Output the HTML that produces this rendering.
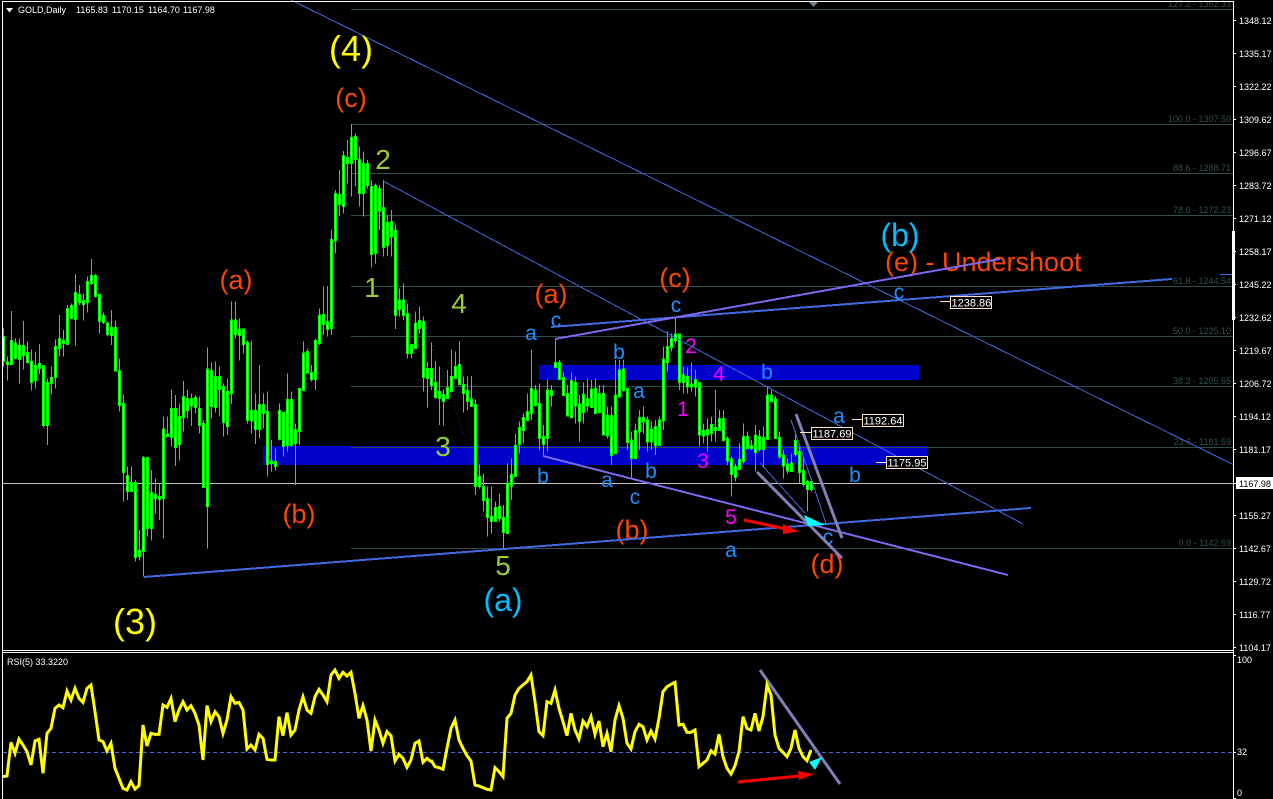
<!DOCTYPE html>
<html>
<head>
<meta charset="utf-8">
<title>GOLD,Daily</title>
<style>
html,body{margin:0;padding:0;background:#000;width:1273px;height:799px;overflow:hidden}
svg{position:absolute;left:0;top:0;display:block;font-family:"Liberation Sans",Arial,sans-serif}
.n{vector-effect:non-scaling-stroke;fill:none}
.c{shape-rendering:crispEdges}
.ax text{font-size:9px;fill:#fff}
.fib text{font-size:9px;fill:#2f4f4f;text-anchor:end}
.o{fill:#ff4500;font-size:27px;text-anchor:middle}
.g{fill:#9acd32;font-size:28px;text-anchor:middle}
.m{fill:#ff00ff;font-size:21px;text-anchor:middle}
.b{fill:#1e90ff;font-size:21px;text-anchor:middle}
.tag text{font-size:11px;fill:#fff}
.tag rect{fill:#000;stroke:#ffe4c4;stroke-width:1}
.tag path{stroke:#ffe4c4;stroke-width:1;fill:none}
</style>
</head>
<body>
<svg width="1273" height="799" viewBox="0 0 1273 799" xmlns="http://www.w3.org/2000/svg">
<rect width="1273" height="799" fill="#000"/>

<!-- zones -->
<g class="c">
<rect x="539" y="365" width="380" height="15" fill="#0000cd"/>
<rect x="263" y="446" width="664" height="19" fill="#0000cd"/>
</g>

<!-- fibo lines -->
<g class="fib">
<path class="c" d="M351 9.5H1233M351 124.5H1233M351 173.5H1233M351 215.5H1233M351 286.5H1233M351 336.5H1233M351 386.5H1233M351 447.5H1233M351 548.5H1233" stroke="#2f4f4f" stroke-width="1" fill="none"/>
<text x="1231" y="7">127.2 - 1352.33</text>
<text x="1231" y="122">100.0 - 1307.50</text>
<text x="1231" y="171">88.6 - 1288.71</text>
<text x="1231" y="213">78.6 - 1272.23</text>
<text x="1231" y="284">61.8 - 1244.54</text>
<text x="1231" y="334">50.0 - 1225.10</text>
<text x="1231" y="384">38.2 - 1205.65</text>
<text x="1231" y="445">23.6 - 1181.59</text>
<text x="1231" y="546">0.0 - 1142.69</text>
</g>

<!-- current price line -->
<path class="c" d="M3 483.5H1233" stroke="#c0c0c0" stroke-width="1"/>
<path d="M351 124L353 130L397 253L427 333L447 383L473 463L503 548" fill="none" stroke="#22228a" stroke-width="1" stroke-dasharray="1 3"/>

<!-- candles -->
<g class="c">
<g transform="translate(.5,250) scale(1,.33333)">
<path id="w1" class="n" stroke="#00ff00" stroke-width="1" d="M3 235V350M7 320V392M11 183V345M15 265V325M19 265V400M23 213V358M27 275V340M31 298V422M35 305V415M39 282V372M43 345V532M47 385V585M51 350V433M55 268V415M59 195V320M63 240V320M67 165V280M71 160V205M75 72V287M79 105V165M83 130V212M87 80V188M91 27V105M95 72V143M99 136V250M103 188V222M107 215V260M111 180V285M115 212V362M119 325V485M123 433V755M127 650V750M131 650V722M135 690V935M139 840V932M143 618V980M147 625V860M151 660V872M155 685V790M159 700V810M163 500V865M167 500V558M171 418V590M175 435V648M179 460V632M183 393V545M187 420V505M191 430V528M195 435V490M199 440V550M203 510V710M207 292V895M211 338V505M215 335V488M219 350V500M223 400V560M227 385V555M231 155V462M235 155V265M239 205V332M243 235V310M247 272V520M251 272V550M255 430V582M259 345V565M263 430V535M267 425V680M271 570V665M275 595V662M279 460V572M283 490V620M287 370V605M291 425V590M295 520V705M299 418V585M303 275V420M307 295V368M311 345V395M315 265V420"/>
<path class="n" stroke="#00ff00" stroke-width="3" stroke-linecap="square" d="M3 262V332M7 339V341M11 275V340M15 282V322M19 290V325M23 290V313M27 310V335M31 338V394M35 350V388M39 344V352M43 350V523M47 400V523M51 386V398M55 292V380M59 268V292M63 275V278M67 178V280M71 170V203M75 130V205M79 136V155M83 154V160M87 97V155M91 80V97M95 80V136M99 136V212M103 200V214M107 222V250M111 236V254M115 236V360M119 365V463M123 463V665M127 680V722M131 700V722M135 700V920M139 905V917M143 625V902M147 625V832M151 730V832M155 736V742M159 742V746M163 540V742M167 555V557M171 478V560M175 478V590M179 502V580M183 443V500M187 448V478M191 448V465M195 445V470M199 478V523M203 523V710M207 360V766M211 365V466M215 382V470M219 382V416M223 412V515M227 428V527M231 213V428M235 213V250M239 240V254M243 240V280M247 280V508M251 485V510M255 484V536M259 466V536M263 466V488M267 488V640M271 636V638M275 637V646M279 485V565M283 490V586M287 452V584M291 452V584M295 541V578M299 418V541M303 312V418M307 307V366M311 370V385M315 274V386"/>
<path class="n" stroke="#ffffff" stroke-width="1" d="M3 262V332M7 339V341M11 275V340M15 282V322M19 290V325M23 290V313M27 310V335M31 338V394M35 350V388M39 344V352M43 350V523M47 400V523M51 386V398M55 292V380M59 268V292M63 275V278M67 178V280M71 170V203M75 130V205M79 136V155M83 154V160M87 97V155M91 80V97M95 80V136M99 136V212M103 200V214M107 222V250M111 236V254M115 236V360M119 365V463M123 463V665M127 680V722M131 700V722M135 700V920M139 905V917M143 625V902M147 625V832M151 730V832M155 736V742M159 742V746M163 540V742M167 555V557M171 478V560M175 478V590M179 502V580M183 443V500M187 448V478M191 448V465M195 445V470M199 478V523M203 523V710M207 360V766M211 365V466M215 382V470M219 382V416M223 412V515M227 428V527M231 213V428M235 213V250M239 240V254M243 240V280M247 280V508M251 485V510M255 484V536M259 466V536M263 466V488M267 488V640M271 636V638M275 637V646M279 485V565M283 490V586M287 452V584M291 452V584M295 541V578M299 418V541M303 312V418M307 307V366M311 370V385M315 274V386"/>
</g>
<g transform="translate(.5,100) scale(1,.33333)">
<path class="n" stroke="#00ff00" stroke-width="1" d="M319 625V735M323 560V705M327 558V710M331 388V705M335 270V460M339 210V348M343 153V340M347 120V250M351 72V290M355 100V260M359 140V320M363 155V350M367 180V265M371 240V503M375 250V490M379 255V390M383 240V470M387 345V468M391 330V470M395 373V687M399 565V650M403 550V660M407 610V775M411 735V775M415 635V745M419 620V700M423 650V875M427 785V922M431 727V870M435 783V895M439 800V975M443 868V977M447 810V893M451 748V877M455 755V830M459 723V852M463 830V938M467 830V930M471 828V918M475 898V1185M479 1093V1165M483 1120V1235M487 1160V1310M491 1160V1300M495 1205V1265M499 1180V1265M503 1215V1345M507 1090V1300M511 1075V1200M515 1000V1130M519 965V1060"/>
<path class="n" stroke="#00ff00" stroke-width="3" stroke-linecap="square" d="M319 648V728M323 647V670M327 668V685M331 422V682M335 283V420M339 287V310M343 170V316M347 175V187M351 115V187M355 112V175M359 182V277M363 193V277M367 193V253M371 262V460M375 260V458M379 268V330M383 325V440M387 370V433M391 367V408M395 395V643M399 603V625M403 603V643M407 643V758M411 737V758M415 672V742M419 665V682M423 667V830M427 808V832M431 808V853M435 850V890M439 877V892M443 887V902M447 865V893M451 832V872M455 802V832M459 797V850M463 857V877M467 875V902M471 900V916M475 916V1156M479 1132V1156M483 1163V1198M487 1198V1250M491 1252V1262M495 1226V1262M499 1222V1252M503 1255V1295M507 1152V1297M511 1127V1155M515 1040V1127M519 985V1030"/>
<path class="n" stroke="#ffffff" stroke-width="1" d="M319 648V728M323 647V670M327 668V685M331 422V682M335 283V420M339 287V310M343 170V316M347 175V187M351 115V187M355 112V175M359 182V277M363 193V277M367 193V253M371 262V460M375 260V458M379 268V330M383 325V440M387 370V433M391 367V408M395 395V643M399 603V625M403 603V643M407 643V758M411 737V758M415 672V742M419 665V682M423 667V830M427 808V832M431 808V853M435 850V890M439 877V892M443 887V902M447 865V893M451 832V872M455 802V832M459 797V850M463 857V877M467 875V902M471 900V916M475 916V1156M479 1132V1156M483 1163V1198M487 1198V1250M491 1252V1262M495 1226V1262M499 1222V1252M503 1255V1295M507 1152V1297M511 1127V1155M515 1040V1127M519 985V1030"/>
</g>
<g transform="translate(.5,310) scale(1,.33333)">
<path class="n" stroke="#00ff00" stroke-width="1" d="M523 310V400M527 250V330M531 120V330M535 225V290M539 220V420M543 345V440M547 208V425M551 225V290M555 85V175M559 150V205M563 188V255M567 225V320M571 188V325M575 200V340M579 255V395M583 218V340M587 205V305M591 210V290M595 205V310M599 225V310M603 225V375M607 290V385M611 290V465M615 150V430M619 150V258M623 150V245M627 235V420M631 365V505M635 340V440M639 300V420M643 290V370M647 320V425M651 335V420M655 330V435M659 320V405M663 110V360M667 65V185M671 70V125M675 22V100M679 75V240M683 170V250M687 173V250M691 157V245M695 180V260M699 215V410M703 340V400M707 325V425M711 320V395M715 240V395M719 300V360M723 300V395M727 380V465M731 440V560M735 460V515M739 400V475M743 340V460M747 365V415M751 390V420M755 345V485M759 360V425M763 350V470M767 228V390M771 240V272M775 258V385M779 365V445M783 420V505M787 445V490M791 430V485M795 365V440M799 410V520M803 440V530M807 510V605M811 505V545"/>
<path class="n" stroke="#00ff00" stroke-width="3" stroke-linecap="square" d="M523 325V358M527 308V328M531 238V308M535 243V283M539 283V383M543 382V400M547 243V382M551 245V253M555 160V170M559 160V205M563 205V253M567 253V315M571 215V320M575 220V285M579 285V332M583 255V305M587 268V285M591 240V290M595 238V308M599 253V305M603 253V372M607 320V375M611 320V433M615 258V428M619 183V258M623 180V238M627 238V395M631 393V443M635 365V443M639 325V363M643 325V333M647 333V393M651 360V393M655 352V405M659 333V403M663 150V330M667 113V155M671 88V110M675 75V88M679 75V215M683 198V215M687 203V228M691 225V228M695 212V228M699 220V372M703 365V375M707 362V372M711 347V368M715 355V358M719 328V358M723 328V388M727 388V450M731 450V490M735 472V500M739 452V475M743 382V452M747 382V412M751 410V412M755 378V425M759 382V415M763 385V415M767 258V385M771 258V272M775 270V382M779 385V438M783 438V465M787 465V480M791 462V482M795 395V430M799 427V485M803 485V520M807 518V535M811 518V535"/>
<path class="n" stroke="#ffffff" stroke-width="1" d="M523 325V358M527 308V328M531 238V308M535 243V283M539 283V383M543 382V400M547 243V382M551 245V253M555 160V170M559 160V205M563 205V253M567 253V315M571 215V320M575 220V285M579 285V332M583 255V305M587 268V285M591 240V290M595 238V308M599 253V305M603 253V372M607 320V375M611 320V433M615 258V428M619 183V258M623 180V238M627 238V395M631 393V443M635 365V443M639 325V363M643 325V333M647 333V393M651 360V393M655 352V405M659 333V403M663 150V330M667 113V155M671 88V110M675 75V88M679 75V215M683 198V215M687 203V228M691 225V228M695 212V228M699 220V372M703 365V375M707 362V372M711 347V368M715 355V358M719 328V358M723 328V388M727 388V450M731 450V490M735 472V500M739 452V475M743 382V452M747 382V412M751 410V412M755 378V425M759 382V415M763 385V415M767 258V385M771 258V272M775 270V382M779 385V438M783 438V465M787 465V480M791 462V482M795 395V430M799 427V485M803 485V520M807 518V535M811 518V535"/>
</g>
</g>

<!-- labels -->
<text x="351" y="61" text-anchor="middle" font-size="36" fill="#ffff00">(4)</text>
<text x="135" y="634" text-anchor="middle" font-size="36" fill="#ffff00">(3)</text>
<text class="o" x="351" y="107">(c)</text>
<text class="o" x="236" y="289">(a)</text>
<text class="o" x="299" y="523">(b)</text>
<text class="o" x="551" y="303">(a)</text>
<text class="o" x="675" y="287">(c)</text>
<text class="o" x="632" y="539">(b)</text>
<text class="o" x="827" y="573">(d)</text>
<text x="885" y="271" font-size="27" fill="#ff4500">(e) - Undershoot</text>
<text x="503" y="611" text-anchor="middle" font-size="32" fill="#00bfff">(a)</text>
<text x="900" y="246" text-anchor="middle" font-size="32" fill="#00bfff">(b)</text>
<text class="g" x="383" y="169">2</text>
<text class="g" x="372" y="297">1</text>
<text class="g" x="459" y="313">4</text>
<text class="g" x="443" y="456">3</text>
<text class="g" x="503" y="575">5</text>
<text class="m" x="691" y="353">2</text>
<text class="m" x="719" y="381">4</text>
<text class="m" x="683" y="416">1</text>
<text class="m" x="703" y="468">3</text>
<text class="m" x="731" y="524">5</text>
<text class="b" x="531" y="340">a</text>
<text class="b" x="556" y="327">c</text>
<text class="b" x="619" y="359">b</text>
<text class="b" x="639" y="398">a</text>
<text class="b" x="676" y="312">c</text>
<text class="b" x="767" y="379">b</text>
<text class="b" x="543" y="483">b</text>
<text class="b" x="607" y="487">a</text>
<text class="b" x="651" y="478">b</text>
<text class="b" x="635" y="504">c</text>
<text class="b" x="731" y="557">a</text>
<text class="b" x="828" y="544">c</text>
<text class="b" x="839" y="423">a</text>
<text class="b" x="855" y="482">b</text>
<text class="b" x="899" y="299">c</text>

<!-- trend lines -->
<g class="c" fill="none">
<path d="M291 0L1234 465" stroke="#4169e1" stroke-width="1"/>
<path d="M383 181L1023 524" stroke="#4169e1" stroke-width="1"/>
<path d="M1220 274.5H1232" stroke="#4169e1" stroke-width="1"/>
<path d="M760 463L805 513" stroke="#4169e1" stroke-width="1"/>
<path d="M791 420L826 523" stroke="#4169e1" stroke-width="1"/>
<path d="M144 577L1031 508" stroke="#4169e1" stroke-width="2"/>
<path d="M551 327L1172 279" stroke="#4169e1" stroke-width="2"/>
<path d="M555 339L1000 259" stroke="#7b68ee" stroke-width="2"/>
<path d="M543 456L1008 575" stroke="#7b68ee" stroke-width="2"/>
</g>
<g fill="none" stroke="#8080b8" stroke-width="3">
<path d="M796 414L842 538"/>
<path d="M757 472L842 558"/>
<path d="M760 670L840 784"/>
</g>

<!-- arrows -->
<path d="M744 520L784 528.5" stroke="#ff0000" stroke-width="3" fill="none"/>
<path d="M783 524L799 531.500L783 534Z" fill="#ff0000"/>
<path d="M738 782L799 776" stroke="#ff0000" stroke-width="3" fill="none"/>
<path d="M798 771L814 774L799 780Z" fill="#ff0000"/>
<path d="M804 515L825 525L808 526Z" fill="#00ffff"/>
<path d="M822 757L809 762L815 770Z" fill="#00ffff"/>

<!-- price tags -->
<g class="tag c">
<path d="M852 419.500H862M800 432.500H811M876 462.500H886M940 301.500H950"/>
<rect x="862.500" y="414.500" width="41" height="12"/>
<rect x="811.500" y="427.500" width="41" height="12"/>
<rect x="886.500" y="456.500" width="41" height="12"/>
<rect x="950.500" y="296.500" width="41" height="12"/>
</g>
<g class="tag">
<text x="863.500" y="424.500">1192.64</text>
<text x="812.500" y="437.500">1187.69</text>
<text x="887.500" y="466.500">1175.95</text>
<text x="951.500" y="306.500">1238.86</text>
</g>

<!-- RSI -->
<path class="c" d="M3 752.500H1233" stroke="#4169e1" stroke-width="1" stroke-dasharray="4 3" fill="none"/>
<g transform="translate(0,645) scale(.33333)">
<polyline class="n" stroke="#ffff00" stroke-width="3" points="9,395 21,393 33,292 45,325 57,282 69,300 81,320 93,360 105,288 117,283 129,385 141,265 153,250 165,190 177,180 189,188 201,138 213,165 225,130 237,160 249,172 261,130 273,120 285,200 297,285 309,290 321,318 333,295 345,370 357,400 369,430 381,435 393,410 405,432 417,422 429,240 441,303 453,265 465,268 477,268 489,180 501,187 513,160 525,230 537,195 549,170 561,195 573,182 585,205 597,240 609,345 621,182 633,230 645,200 657,215 669,265 681,225 693,155 705,175 717,172 729,195 741,312 753,300 765,315 777,268 789,280 801,343 813,345 825,345 837,215 849,272 861,203 873,270 885,255 897,195 909,155 921,195 933,205 945,155 957,133 969,150 981,170 993,90 1005,75 1017,100 1029,82 1041,93 1053,82 1065,145 1077,220 1089,182 1101,225 1113,318 1125,225 1137,255 1149,295 1161,260 1173,272 1185,348 1197,328 1209,340 1221,367 1233,345 1245,295 1257,288 1269,352 1281,340 1293,350"/>
</g>
<g transform="translate(430,645) scale(.33333)">
<polyline class="n" stroke="#ffff00" stroke-width="3" points="3,345 15,365 27,368 39,373 51,310 63,250 75,225 87,285 99,310 111,332 123,348 135,420 147,423 159,428 171,433 183,435 195,368 207,380 219,395 231,220 243,205 255,150 267,130 279,120 291,110 303,90 315,170 327,260 339,272 351,170 363,175 375,135 387,190 399,230 411,272 423,205 435,255 447,282 459,228 471,245 483,215 495,268 507,228 519,305 531,265 543,320 555,225 567,182 579,220 591,295 603,312 615,260 627,238 639,245 651,285 663,258 675,282 687,220 699,140 711,125 723,118 735,112 747,240 759,238 771,262 783,262 795,255 807,365 819,355 831,345 843,317 855,327 867,268 879,335 891,370 903,387 915,362 927,320 939,215 951,250 963,255 975,205 987,258 999,215 1011,120 1023,150 1035,270 1047,310 1059,322 1071,335 1083,310 1095,255 1107,310 1119,335 1131,347 1143,315"/>
</g>

<!-- frame -->
<g class="c" fill="none" stroke="#fff" stroke-width="1">
<path d="M2.500 799V1.500H1233.500V799"/>
<path d="M2 650.500H1234M2 652.500H1234"/>
<path d="M1234 20.500h2M1234 53.500h2M1234 86.500h2M1234 119.500h2M1234 152.500h2M1234 185.500h2M1234 218.500h2M1234 251.500h2M1234 284.500h2M1234 317.500h2M1234 350.500h2M1234 383.500h2M1234 416.500h2M1234 449.500h2M1234 483.500h2M1234 515.500h2M1234 548.500h2M1234 581.500h2M1234 614.500h2M1234 647.500h2M1234 655.500h2M1234 752.500h2M1234 798.500h2"/>
</g>
<rect x="1232" y="231" width="3" height="89" fill="#fff"/>
<path d="M809 2H818L813.500 7Z" fill="#708090"/>

<!-- header -->
<path d="M6 8H13L9.500 12.500Z" fill="#fff"/>
<g class="ax">
<text x="18" y="13">GOLD,Daily</text>
<text x="76" y="13">1165.83</text>
<text x="112" y="13">1170.15</text>
<text x="148" y="13">1164.70</text>
<text x="183" y="13">1167.98</text>
<text x="7" y="665">RSI(5) 33.3220</text>
<text x="1239" y="24">1348.12</text>
<text x="1239" y="57">1335.17</text>
<text x="1239" y="90">1322.22</text>
<text x="1239" y="123">1309.62</text>
<text x="1239" y="156">1296.67</text>
<text x="1239" y="189">1283.72</text>
<text x="1239" y="222">1271.12</text>
<text x="1239" y="255">1258.17</text>
<text x="1239" y="288">1245.22</text>
<text x="1239" y="321">1232.62</text>
<text x="1239" y="354">1219.67</text>
<text x="1239" y="387">1206.72</text>
<text x="1239" y="420">1194.12</text>
<text x="1239" y="453">1181.17</text>
<text x="1239" y="519">1155.27</text>
<text x="1239" y="552">1142.67</text>
<text x="1239" y="585">1129.72</text>
<text x="1239" y="618">1116.77</text>
<text x="1239" y="651">1104.17</text>
<text x="1237" y="663">100</text>
<text x="1237" y="755">32</text>
<text x="1237" y="796">0</text>
</g>
<rect x="1236" y="477" width="37" height="12" fill="#fff"/>
<text x="1239" y="487" font-size="9" fill="#000">1167.98</text>
</svg>
</body>
</html>
